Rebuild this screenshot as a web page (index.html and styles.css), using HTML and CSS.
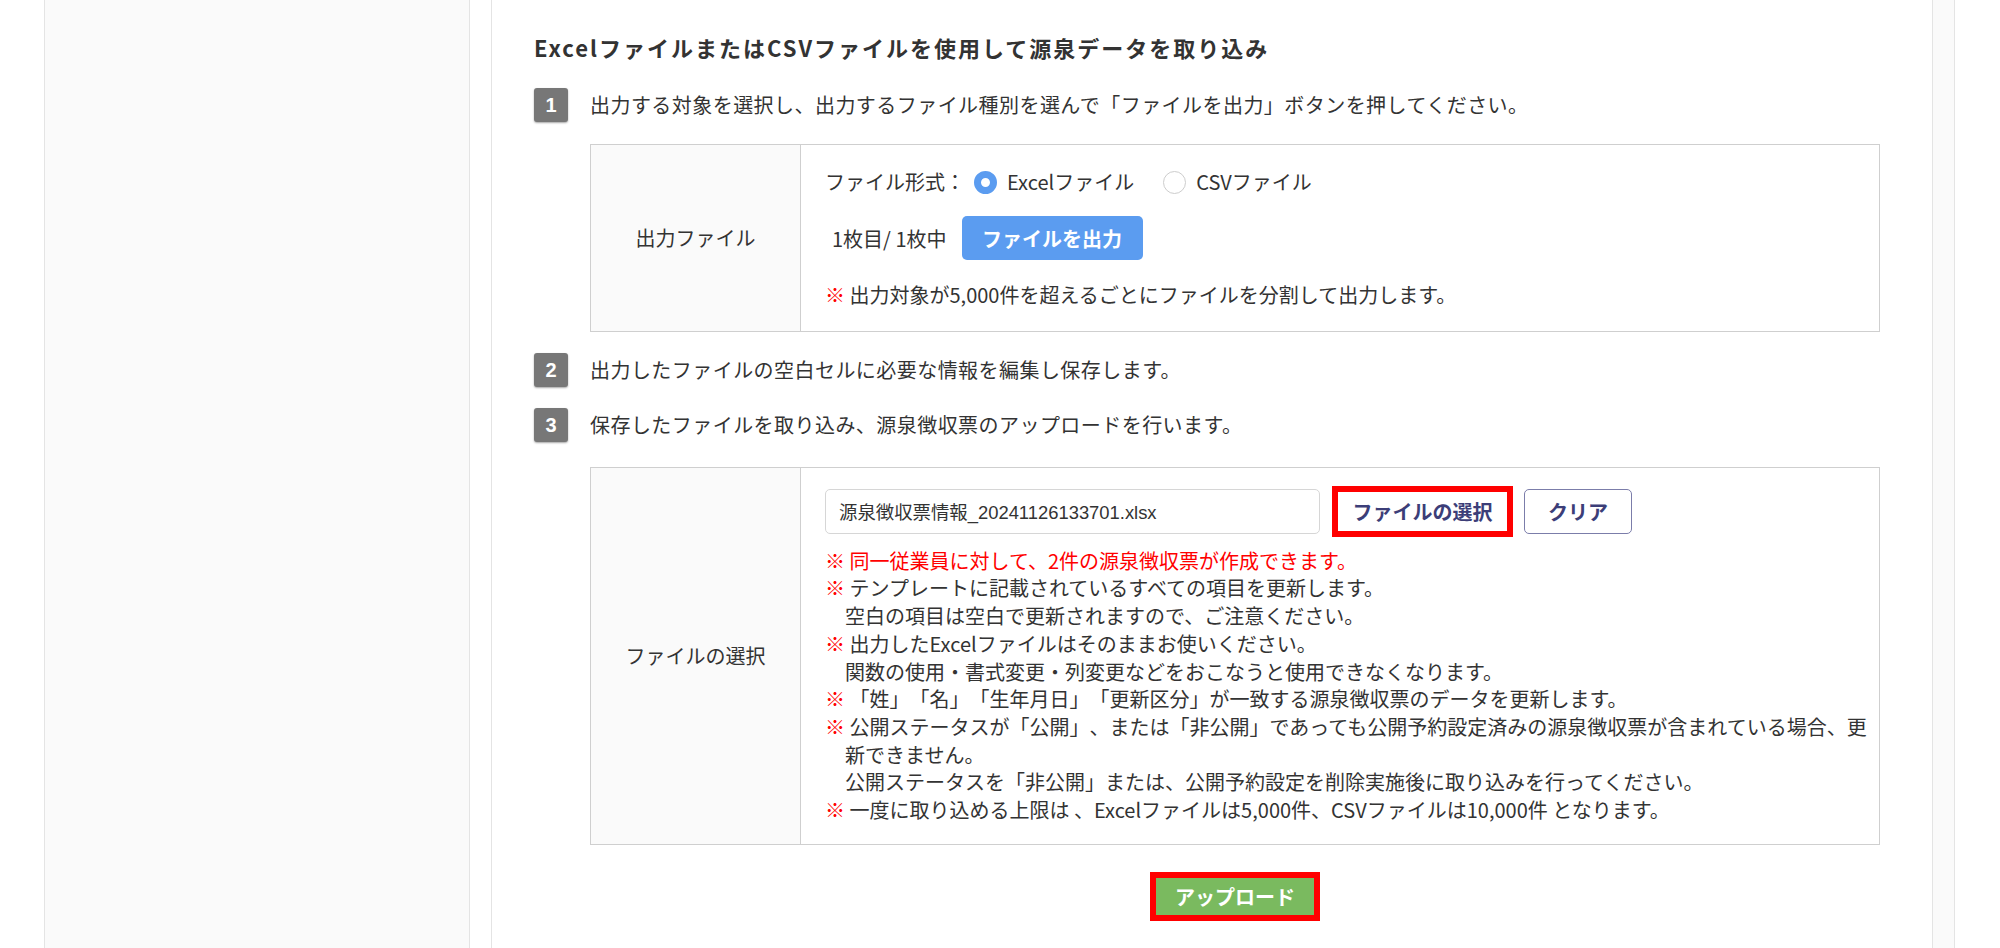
FILE: index.html
```html
<!DOCTYPE html>
<html lang="ja">
<head>
<meta charset="utf-8">
<title>源泉データ取り込み</title>
<link rel="stylesheet" href="styles.css">
</head>
<body>
<div class="page">
  <aside class="side-left"></aside>
  <main class="main">
    <h2 class="title">ExcelファイルまたはCSVファイルを使用して源泉データを取り込み</h2>

    <div class="step">
      <span class="badge">1</span>
      <p class="step-text">出力する対象を選択し、出力するファイル種別を選んで「ファイルを出力」ボタンを押してください。</p>
    </div>
    <div class="step-body">
      <div class="box">
        <div class="box-label">出力ファイル</div>
        <div class="box-content box-content-out">
          <div class="format-row">
            <span class="format-label">ファイル形式：</span>
            <span class="radio radio-on"></span>
            <span class="radio-text">Excelファイル</span>
            <span class="radio"></span>
            <span class="radio-text">CSVファイル</span>
          </div>
          <div class="out-row">
            <span class="count">1枚目/ 1枚中</span>
            <button class="btn-blue">ファイルを出力</button>
          </div>
          <div class="note"><span class="kome">※</span> 出力対象が5,000件を超えるごとにファイルを分割して出力します。</div>
        </div>
      </div>
    </div>

    <div class="step step-2">
      <span class="badge">2</span>
      <p class="step-text">出力したファイルの空白セルに必要な情報を編集し保存します。</p>
    </div>

    <div class="step step-3">
      <span class="badge">3</span>
      <p class="step-text">保存したファイルを取り込み、源泉徴収票のアップロードを行います。</p>
    </div>
    <div class="step-body step-body-in">
      <div class="box">
        <div class="box-label">ファイルの選択</div>
        <div class="box-content box-content-in">
          <div class="file-row">
            <input class="file-input" type="text" value="源泉徴収票情報_20241126133701.xlsx" readonly>
            <button class="btn-select">ファイルの選択</button>
            <button class="btn-clear">クリア</button>
          </div>
          <div class="notes">
            <div class="note note-red"><span class="kome">※</span> 同一従業員に対して、2件の源泉徴収票が作成できます。</div>
            <div class="note"><span class="kome">※</span> テンプレートに記載されているすべての項目を更新します。<br>空白の項目は空白で更新されますので、ご注意ください。</div>
            <div class="note"><span class="kome">※</span> 出力したExcelファイルはそのままお使いください。<br>関数の使用・書式変更・列変更などをおこなうと使用できなくなります。</div>
            <div class="note"><span class="kome">※</span> 「姓」「名」「生年月日」「更新区分」が一致する源泉徴収票のデータを更新します。</div>
            <div class="note"><span class="kome">※</span> 公開ステータスが「公開」、または「非公開」であっても公開予約設定済みの源泉徴収票が含まれている場合、更新できません。<br>公開ステータスを「非公開」または、公開予約設定を削除実施後に取り込みを行ってください。</div>
            <div class="note"><span class="kome">※</span> 一度に取り込める上限は 、Excelファイルは5,000件、CSVファイルは10,000件 となります。</div>
          </div>
        </div>
      </div>
      <div class="upload-wrap">
        <button class="btn-upload">アップロード</button>
      </div>
    </div>
  </main>
  <aside class="side-right"></aside>
</div>
</body>
</html>
```

FILE: styles.css
```css
* { box-sizing: border-box; }

html, body {
  margin: 0;
  padding: 0;
  background: #fff;
}

body {
  font-family: "Noto Sans CJK JP", "Noto Sans", sans-serif;
  font-size: 20px;
  color: #333;
  text-spacing-trim: space-all;
}

.page {
  display: flex;
  height: 948px;
  overflow: hidden;
}

.side-left {
  flex: 0 0 426px;
  margin-left: 44px;
  background: #fafafa;
  border-left: 1px solid #e4e4e4;
  border-right: 1px solid #e4e4e4;
}

.main {
  flex: 0 0 1442px;
  margin-left: 21px;
  border-left: 1px solid #e4e4e4;
  border-right: 1px solid #e4e4e4;
  padding: 32px 52px 0 42px;
}

.side-right {
  flex: 0 0 22px;
  background: #fafafa;
  border-right: 1px solid #e4e4e4;
}

.title {
  margin: 0;
  font-size: 22px;
  line-height: 30px;
  font-weight: 700;
  letter-spacing: 2px;
  color: #333;
}

.step {
  display: flex;
  align-items: center;
  gap: 22px;
  margin-top: 26px;
}

.step-2 { margin-top: 21px; }
.step-3 { margin-top: 21px; }

.badge {
  flex: 0 0 34px;
  width: 34px;
  height: 34px;
  border-radius: 3px;
  background: #777;
  color: #fff;
  font-family: "Liberation Sans", sans-serif;
  font-weight: 700;
  font-size: 20px;
  line-height: 34px;
  text-align: center;
  box-shadow: 0 1px 2px rgba(0, 0, 0, 0.35);
}

.step-text {
  margin: 0;
  line-height: 30px;
  letter-spacing: 0.45px;
}

.step-body {
  margin-left: 56px;
  margin-top: 22px;
}

.step-body-in {
  margin-top: 25px;
}

.box {
  display: flex;
  border: 1px solid #cfcfcf;
}

.box-label {
  flex: 0 0 210px;
  background: #fafafa;
  border-right: 1px solid #cfcfcf;
  display: flex;
  align-items: center;
  justify-content: center;
}

.box-content {
  flex: 1;
  padding: 0 8px 0 24px;
}

.box-content-out {
  padding-top: 22px;
  padding-bottom: 22px;
}

.format-row {
  display: flex;
  align-items: center;
  line-height: 30px;
}

.radio {
  width: 23px;
  height: 23px;
  border-radius: 50%;
  border: 1.5px solid #cdcdcd;
  background: #fff;
  margin-left: 9px;
}

.radio-on {
  border: 7.5px solid #5b9cf0;
}

.radio-text {
  margin-left: 10px;
  margin-right: 20px;
}

.out-row {
  display: flex;
  align-items: center;
  margin-top: 19px;
}

.count {
  margin-left: 7px;
  margin-right: 15px;
}

.btn-blue {
  width: 181px;
  height: 44px;
  border: none;
  border-radius: 5px;
  background: #5b9cf0;
  color: #fff;
  font-family: inherit;
  font-size: 20px;
  font-weight: 700;
  padding: 0;
}

.box-content-out .note {
  margin-top: 21px;
}

.note {
  line-height: 27.7px;
  padding-left: 1em;
  text-indent: -1em;
}

.kome {
  color: #f00;
}

.note-red {
  color: #f00;
}

.box-content-in {
  padding-top: 18px;
  padding-bottom: 20px;
}

.file-row {
  display: flex;
  align-items: center;
}

.file-input {
  width: 495px;
  height: 45px;
  border: 1px solid #d6d6d6;
  border-radius: 5px;
  padding: 0 13px;
  font-family: "Liberation Sans", "Noto Sans CJK JP", sans-serif;
  font-size: 18.4px;
  color: #333;
  background: #fff;
  outline: none;
}

.btn-select {
  margin-left: 12px;
  width: 181px;
  height: 51px;
  border: 6px solid #f00;
  background: #fff;
  color: #3c3e78;
  font-family: inherit;
  font-size: 20px;
  font-weight: 700;
  padding: 0;
}

.btn-clear {
  margin-left: 11px;
  width: 108px;
  height: 45px;
  border: 1.5px solid #7b7daa;
  border-radius: 5px;
  background: #fff;
  color: #3c3e78;
  font-family: inherit;
  font-size: 20px;
  font-weight: 700;
  padding: 0;
}

.notes {
  margin-top: 10px;
}

.upload-wrap {
  display: flex;
  justify-content: center;
  margin-top: 27px;
}

.btn-upload {
  width: 170px;
  height: 49px;
  border: 6px solid #f00;
  background: #7aba5f;
  color: #fff;
  font-family: inherit;
  font-size: 20px;
  font-weight: 700;
  padding: 0;
}
```
